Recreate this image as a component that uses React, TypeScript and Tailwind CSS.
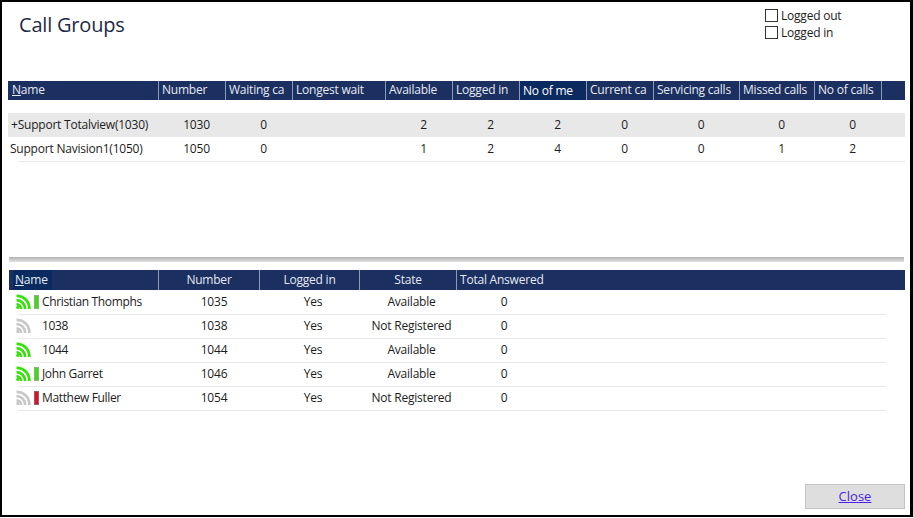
import React from "react";

const topCols = [
  { label: "Waiting ca", w: "w-[67px]" },
  { label: "Longest wait", w: "w-[93px]" },
  { label: "Available", w: "w-[67px]" },
  { label: "Logged in", w: "w-[67px]" },
  { label: "No of me", w: "w-[67px]", active: true },
  { label: "Current ca", w: "w-[67px]" },
  { label: "Servicing calls", w: "w-[86px]" },
  { label: "Missed calls", w: "w-[75px]" },
  { label: "No of calls", w: "w-[67px]" },
];

const groups = [
  { name: "+Support Totalview(1030)", number: "1030", vals: ["0", "", "2", "2", "2", "0", "0", "0", "0"], shaded: true },
  { name: "Support Navision1(1050)", number: "1050", vals: ["0", "", "1", "2", "4", "0", "0", "1", "2"], shaded: false },
];

const members = [
  { name: "Christian Thomphs", number: "1035", state: "Available", on: true, bar: "border border-[#86b878] bg-[#3fd81a]" },
  { name: "1038", number: "1038", state: "Not Registered", on: false, bar: "" },
  { name: "1044", number: "1044", state: "Available", on: true, bar: "" },
  { name: "John Garret", number: "1046", state: "Available", on: true, bar: "border border-[#86b878] bg-[#3fd81a]" },
  { name: "Matthew Fuller", number: "1054", state: "Not Registered", on: false, bar: "border border-[#a05a62] bg-[#d9122c]" },
];

function Signal({ on }: { on: boolean }) {
  const color = on ? "#39e010" : "#c8c8c8";
  return (
    <svg width="15" height="15" viewBox="0 0 15 15" fill="none" stroke={color} strokeWidth="2.7" className="-ml-[2px] shrink-0">
      <path d="M0.5 1.8C8 1.8 13.4 7.4 13.4 15" />
      <path d="M0.5 6.2C5.4 6.2 9.2 10 9.2 15" />
      <path d="M0.5 10.4C3.2 10.4 5 12.4 5 15" />
      <circle cx="1.8" cy="13.4" r="1.6" fill={color} stroke="none" />
    </svg>
  );
}

function Check({ label }: { label: string }) {
  return (
    <div className="flex h-[17px] items-center gap-[3px]">
      <span className="h-[13px] w-[13px] border border-[#333] bg-white" />
      <span>{label}</span>
    </div>
  );
}

export default function App() {
  return (
    <div className="flex h-[517px] w-[913px] flex-col border-y-2 border-r-[3px] border-l-[2px] border-black bg-white font-['Open_Sans',sans-serif] text-[12px] tracking-[-0.22px] text-[#1c1c1c]">
      <div className="flex h-[79px] shrink-0 items-start justify-between">
        <h1 className="ml-[17px] mt-[9px] text-[20px] leading-[28px] tracking-[-0.2px] text-[#1f2a44]">Call Groups</h1>
        <div className="mr-[65px] mt-[5px] w-[80px] shrink-0">
          <Check label="Logged out" />
          <Check label="Logged in" />
        </div>
      </div>

      {/* top grid */}
      <div className="ml-[6px] w-[897px]">
        <div className="flex h-[19px] bg-[#1b2f60] text-[#e6eaf3]">
          <div className="w-[151px] border-r border-[#8d9ab8] pl-[4px] leading-[18px]">
            <span className="underline">N</span>ame
          </div>
          <div className="w-[67px] border-r border-[#8d9ab8] pl-[3px] leading-[18px]">Number</div>
          {topCols.map((c) => (
            <div
              key={c.label}
              className={`${c.w} overflow-hidden whitespace-nowrap border-r border-[#8d9ab8] pl-[3px] ${c.active ? "bg-[#0b2a5f] leading-[20px] text-white" : "leading-[18px]"}`}
            >
              {c.label}
            </div>
          ))}
        </div>
        <div className="mt-[13px]">
          {groups.map((g) => (
            <div key={g.name} className={`flex items-center ${g.shaded ? "h-[24px] bg-[#e8e8e8]" : "ml-[10px] h-[25px] border-b border-[#e8e8e8]"}`}>
              <div className={`w-[151px] shrink-0 whitespace-nowrap ${g.shaded ? "pl-[3px]" : "-ml-[10px] pl-[2px]"}`}>{g.name}</div>
              <div className="w-[67px] shrink-0 pl-[8px] text-center">{g.number}</div>
              {g.vals.map((v, i) => (
                <div key={i} className={`${topCols[i].w} shrink-0 pl-[8px] text-center`}>{v}</div>
              ))}
            </div>
          ))}
        </div>
      </div>

      {/* splitter */}
      <div className="ml-[7px] mt-[95px] h-[5px] w-[895px] shrink-0 bg-gradient-to-b from-[#b4b4b4] to-[#e2e2e2]" />

      {/* bottom grid */}
      <div className="ml-[7px] mt-[8px] w-[896px]">
        <div className="mb-px flex h-[20px] bg-[#1b2f60] text-[#e6eaf3]">
          <div className="w-[150px] border-r border-[#8d9ab8] pl-[4px] leading-[20px]">
            <span className="inline-block w-[39px] bg-[#0b2a5f] pl-[2px]">
              <span className="underline">N</span>ame
            </span>
          </div>
          <div className="w-[101px] border-r border-[#8d9ab8] text-center leading-[20px]">Number</div>
          <div className="w-[100px] border-r border-[#8d9ab8] text-center leading-[20px]">Logged in</div>
          <div className="w-[97px] border-r border-[#8d9ab8] text-center leading-[20px]">State</div>
          <div className="pl-[3px] leading-[20px]">Total Answered</div>
        </div>
        {members.map((m) => (
          <div key={m.number} className="ml-[9px] flex h-[24px] w-[868px] items-center border-b border-[#e8e8e8] pb-[2px]">
            <div className="flex w-[141px] shrink-0 items-center">
              <Signal on={m.on} />
              <span className={`ml-[3px] h-[14px] w-[5px] shrink-0 ${m.bar}`} />
              <span className="ml-[3px] whitespace-nowrap tracking-[-0.35px]">{m.name}</span>
            </div>
            <div className="flex items-center pl-[3px]">
              <div className="w-[101px] pl-[3px] text-center">{m.number}</div>
              <div className="w-[100px] text-center">Yes</div>
              <div className="w-[97px] text-center">{m.state}</div>
              <div className="w-[88px] text-center">0</div>
            </div>
          </div>
        ))}
      </div>

      <div className="mt-auto mb-[6px] mr-[5px] flex justify-end">
        <button className="h-[25px] w-[100px] border border-[#c4c4c4] bg-[#dedede] text-[13px] tracking-normal text-[#4a1fe6] underline">Close</button>
      </div>
    </div>
  );
}
